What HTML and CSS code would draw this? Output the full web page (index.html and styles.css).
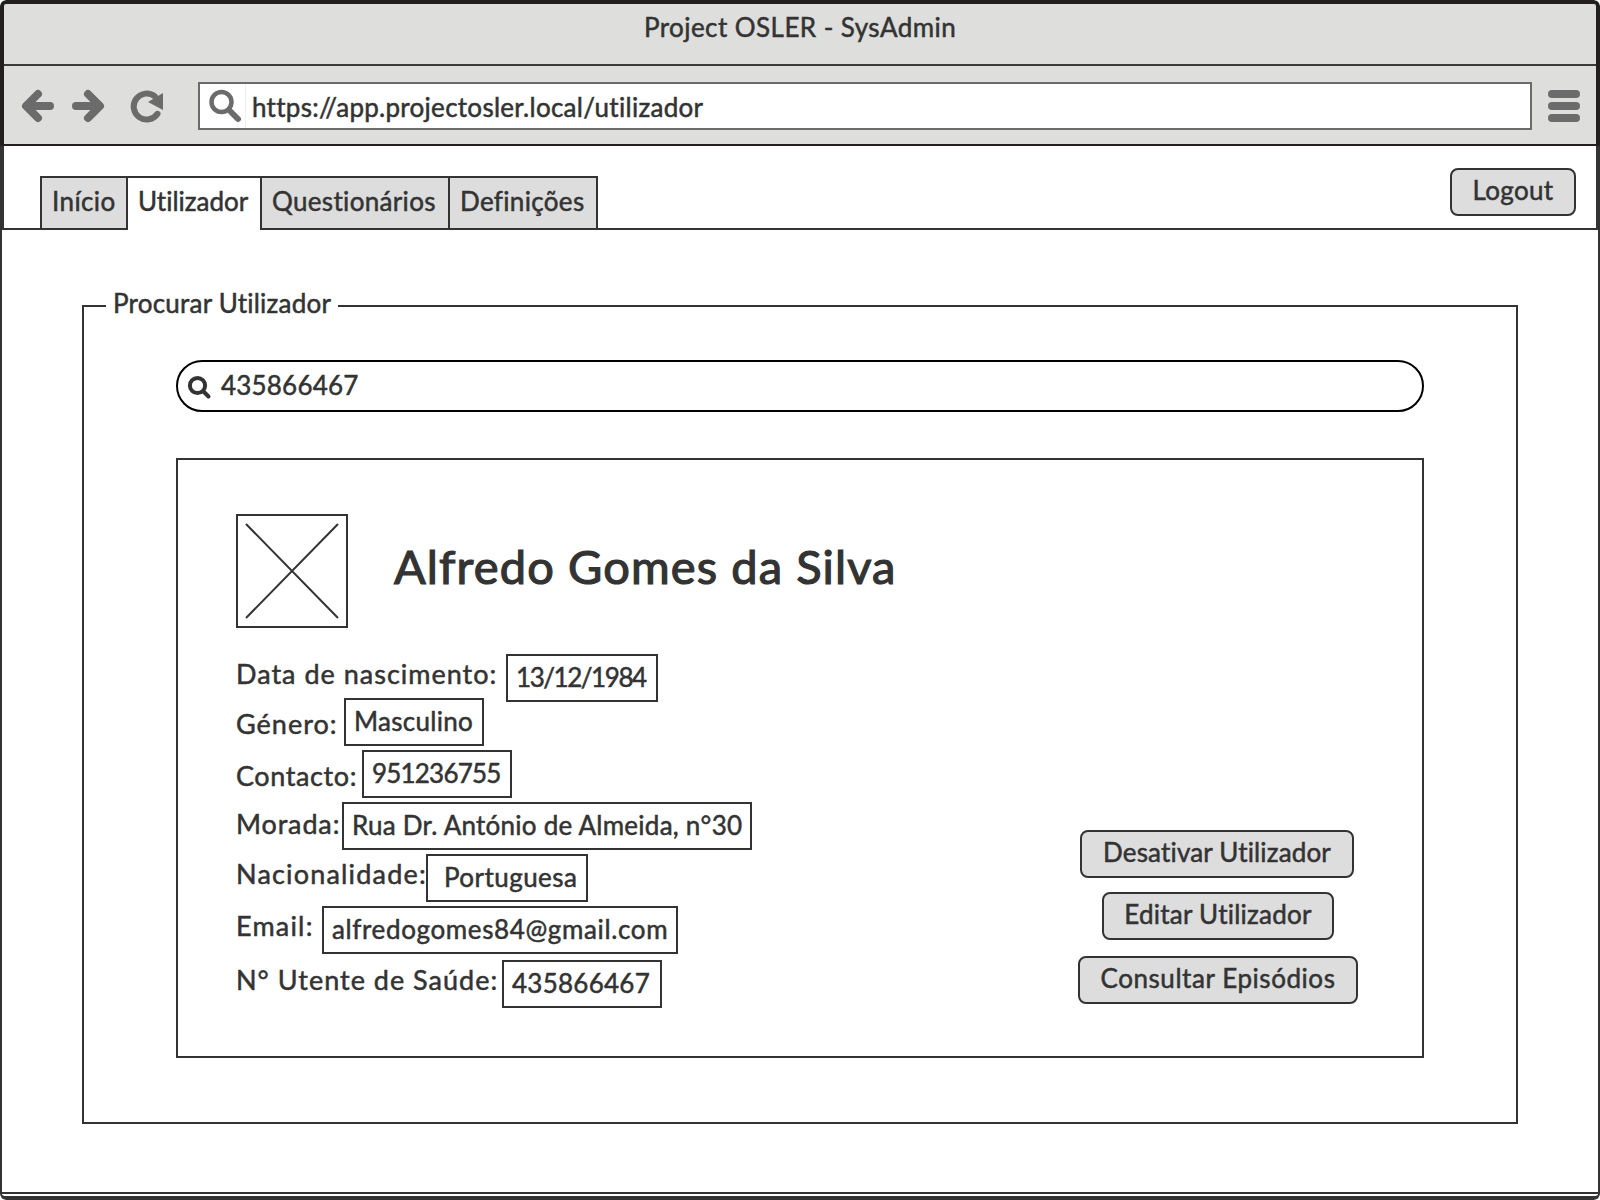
FILE: index.html
```html
<!DOCTYPE html>
<html lang="pt">
<head>
<meta charset="utf-8">
<title>Project OSLER - SysAdmin</title>
<link rel="stylesheet" href="styles.css">
</head>
<body>
<div class="window">
  <header class="chrome">
    <div class="titlebar"><span class="t-title">Project OSLER - SysAdmin</span></div>
    <div class="toolbar">
      <svg class="nav-icons" width="142" height="34" viewBox="0 0 142 34">
        <g fill="none" stroke="#6b6b6b" stroke-width="8" stroke-linecap="round" stroke-linejoin="round">
          <path d="M17 5 5 17l12 12M7 17h22"/>
          <path d="M67 5l12 12-12 12M77 17H55"/>
        </g>
        <path d="M134 7.500A13 13 0 1 0 136.500 24.800" fill="none" stroke="#6b6b6b" stroke-width="6" stroke-linecap="round"/>
        <path d="M142 4v17l-15-8z" fill="#6b6b6b"/>
      </svg>
      <div class="address">
        <span class="address-icon">
          <svg width="34" height="34" viewBox="0 0 34 34" fill="none" stroke="#6b6b6b" stroke-linecap="round">
            <circle cx="13.500" cy="13" r="10" stroke-width="4.500"/>
            <path d="M22 22l8 8" stroke-width="6"/>
          </svg>
        </span>
        <span class="t-url">https://app.projectosler.local/utilizador</span>
      </div>
      <div class="menu"><i></i><i></i><i></i></div>
    </div>
  </header>
  <nav class="tabbar">
    <div class="tabs">
      <a class="tab tab-home"><span class="t-home">Início</span></a>
      <a class="tab tab-user"><span class="t-user">Utilizador</span></a>
      <a class="tab tab-forms"><span class="t-forms">Questionários</span></a>
      <a class="tab tab-settings"><span class="t-settings">Definições</span></a>
    </div>
    <button class="btn btn-logout"><span class="t-logout">Logout</span></button>
  </nav>
  <main class="page">
    <section class="group">
      <h2 class="legend"><span class="t-legend">Procurar Utilizador</span></h2>
      <div class="search">
        <svg width="26" height="26" viewBox="0 0 26 26" fill="none" stroke="#333" stroke-linecap="round">
          <circle cx="11.500" cy="11.500" r="7.600" stroke-width="4"/>
          <path d="M18 18l4.500 4.500" stroke-width="4"/>
        </svg>
        <span class="t-search">435866467</span>
      </div>
      <article class="card">
        <div class="profile">
          <svg class="photo" width="112" height="114" viewBox="0 0 112 114" fill="none" stroke="#333" stroke-width="2">
            <path d="M1 1h110v112H1zM10 10l92 94M102 10l-92 94"/>
          </svg>
          <h1 class="name"><span class="t-name">Alfredo Gomes da Silva</span></h1>
        </div>
        <div class="details">
          <dl class="fields">
            <div class="row r1"><dt><span class="l-birth">Data de nascimento:</span></dt><dd><span class="v-birth">13/12/1984</span></dd></div>
            <div class="row r2"><dt><span class="l-gender">Género:</span></dt><dd><span class="v-gender">Masculino</span></dd></div>
            <div class="row r3"><dt><span class="l-phone">Contacto:</span></dt><dd><span class="v-phone">951236755</span></dd></div>
            <div class="row r4"><dt><span class="l-address">Morada:</span></dt><dd><span class="v-address">Rua Dr. António de Almeida, n°30</span></dd></div>
            <div class="row r5"><dt><span class="l-country">Nacionalidade:</span></dt><dd><span class="v-country">Portuguesa</span></dd></div>
            <div class="row r6"><dt><span class="l-email">Email:</span></dt><dd><span class="v-email">alfredogomes84@gmail.com</span></dd></div>
            <div class="row r7"><dt><span class="l-health">N° Utente de Saúde:</span></dt><dd><span class="v-health">435866467</span></dd></div>
          </dl>
          <div class="actions">
            <button class="btn btn-disable"><span class="t-disable">Desativar Utilizador</span></button>
            <button class="btn btn-edit"><span class="t-edit">Editar Utilizador</span></button>
            <button class="btn btn-episodes"><span class="t-episodes">Consultar Episódios</span></button>
          </div>
        </div>
      </article>
    </section>
  </main>
  <footer class="bottom"></footer>
</div>
</body>
</html>
```
FILE: styles.css
```css
* { box-sizing: border-box; }

body {
  margin: 0;
  background: #fff;
  color: #333;
  font: 26px/32px Lato, "Liberation Sans", sans-serif;
  font-variant-ligatures: none;
  -webkit-text-stroke: 0.5px #333;
}

span { white-space: nowrap; }

.window {
  display: flex;
  flex-direction: column;
  width: 1600px;
  height: 1200px;
  overflow: hidden;
  border-radius: 6px;
}

.chrome {
  height: 146px;
  border: 4px solid #231f20;
  border-bottom-width: 2px;
  border-radius: 6px 6px 0 0;
  background: #dededc;
}

.titlebar {
  height: 62px;
  padding-top: 7px;
  border-bottom: 2px solid #3c3b3b;
  text-align: center;
}

.toolbar {
  display: flex;
  align-items: flex-start;
  height: 78px;
  padding: 16px 16px 0 17px;
}

.nav-icons { flex: none; margin: 7px 35px 0 0; }

.address {
  display: flex;
  width: 1334px;
  height: 48px;
  border: 2px solid #6b6b6b;
  background: #fff;
}

.address-icon {
  width: 46px;
  padding: 5px 0 0 8px;
  border-right: 1px solid #eee;
}

.address-icon svg { display: block; }

.address .t-url { margin: 7px 0 0 6px; }

.menu {
  display: grid;
  gap: 4px;
  margin: 8px 0 0 16px;
}

.menu i {
  width: 32px;
  height: 8px;
  border-radius: 4px;
  background: #6b6b6b;
}

.tabbar {
  display: flex;
  justify-content: space-between;
  height: 84px;
  padding: 22px 20px 0 36px;
  border: 0 solid #333;
  border-width: 0 4px 2px;
}

.tabs {
  display: flex;
  height: 62px;
  padding-top: 8px;
}

.tab {
  height: 52px;
  padding-top: 7px;
  border: 2px solid #333;
  border-bottom: 0;
  background: #ddd;
}

.tab-home { width: 88px; padding-left: 10px; }
.tab-user { width: 132px; height: 54px; padding-left: 10px; border-width: 2px 0 0; background: #fff; }
.tab-forms { width: 190px; padding-left: 10px; }
.tab-settings { width: 148px; padding-left: 10px; border-left: 0; }

.btn {
  height: 48px;
  padding: 4px 0 8px;
  border: 2px solid #333;
  border-radius: 8px;
  background: #ddd;
  color: inherit;
  font: inherit;
  font-variant-ligatures: none;
  text-align: center;
  -webkit-text-stroke: inherit;
}

.btn-logout { width: 126px; }
.btn-disable { width: 274px; margin-right: 2px; }
.btn-edit { width: 232px; margin-top: 14px; }
.btn-episodes { width: 280px; margin-top: 16px; }

.page {
  flex: 1;
  padding: 75px 80px 0;
  border: 0 solid #333;
  border-width: 0 2px;
}

.group {
  height: 819px;
  padding: 0 92px;
  border: 2px solid #333;
}

.legend {
  width: 232px;
  height: 32px;
  margin: -20px 0 41px -70px;
  padding-left: 7px;
  background: #fff;
  font: inherit;
  font-variant-ligatures: none;
}

.search {
  display: flex;
  height: 52px;
  padding: 7px 0 0 8px;
  border: 2px solid #000;
  border-radius: 26px;
}

.search svg { margin: 5px 9px 0 0; }

.card {
  height: 600px;
  margin-top: 46px;
  padding: 54px 64px 0 58px;
  border: 2px solid #333;
}

.profile { display: flex; }

.photo { flex: none; }

.name {
  margin: 24px 0 0 46px;
  font: 47px/56px Lato, "Liberation Sans", sans-serif;
  -webkit-text-stroke: 1.2px #333;
}

.details {
  display: flex;
  justify-content: space-between;
  margin-top: 26px;
}

.fields { margin: 0; }

.row {
  display: flex;
  align-items: flex-start;
  height: 52px;
}

.r1 { height: 44px; }
.r6 { height: 54px; }

dt { font-size: 27px; }

dd {
  height: 48px;
  margin: 0;
  padding: 5px 0 0 8px;
  border: 2px solid #333;
}

.r1 dt { width: 270px; padding-top: 4px; }
.r2 dt { width: 108px; padding-top: 10px; }
.r3 dt { width: 126px; padding-top: 10px; }
.r4 dt { width: 106px; padding-top: 6px; }
.r5 dt { width: 190px; padding-top: 4px; }
.r6 dt { width: 86px; padding-top: 4px; }
.r7 dt { width: 266px; padding-top: 4px; }
.r1 dd { width: 152px; }
.r2 dd { width: 140px; }
.r3 dd { width: 150px; }
.r4 dd { width: 410px; }
.r5 dd { width: 162px; padding-left: 16px; }
.r6 dd { width: 356px; }
.r7 dd { width: 160px; }

.actions {
  display: flex;
  flex-direction: column;
  align-items: center;
  width: 280px;
  padding-top: 176px;
}

.bottom {
  height: 8px;
  border: 2px solid #333;
  border-bottom-width: 4px;
  border-radius: 0 0 6px 6px;
}

/* Tracking of each text */
.t-title { letter-spacing: 0.44px; }
.t-url { letter-spacing: 0.28px; }
.t-home { letter-spacing: 0.4px; }
.t-forms { letter-spacing: 0.33px; }
.t-settings { letter-spacing: 0.33px; }
.t-logout { letter-spacing: 0.35px; }
.t-legend { letter-spacing: 0.22px; }
.t-search { letter-spacing: 0.2px; }
.t-name { letter-spacing: 1.1px; }
.t-disable { letter-spacing: 0.16px; }
.t-edit { letter-spacing: 0.25px; }
.t-episodes { letter-spacing: 0.56px; }
.l-birth { letter-spacing: 1px; }
.l-gender { letter-spacing: 1px; }
.l-phone { letter-spacing: 0.6px; }
.l-address { letter-spacing: 0.85px; }
.l-country { letter-spacing: 1.18px; }
.l-email { letter-spacing: 1.2px; }
.l-health { letter-spacing: 1px; }
.v-birth { letter-spacing: -1.45px; }
.v-gender { letter-spacing: 0.3px; }
.v-phone { letter-spacing: -0.8px; }
.v-address { letter-spacing: 0.25px; }
.v-country { letter-spacing: 0.45px; }
.v-email { letter-spacing: 0.63px; }
.v-health { letter-spacing: 0.25px; }
```
